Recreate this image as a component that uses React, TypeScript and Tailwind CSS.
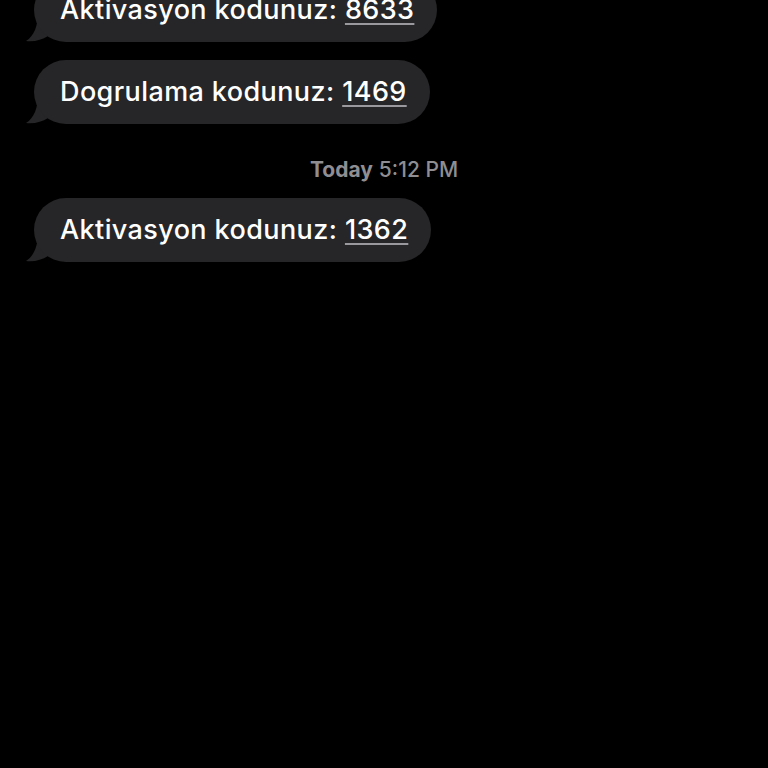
const bubbles = [
  { label: 'Aktivasyon kodunuz:', code: '8633' },
  { label: 'Dogrulama kodunuz:', code: '1469' },
]

function Tail() {
  return (
    <svg
      className="absolute left-[-8px] bottom-0"
      width="30"
      height="30"
      viewBox="0 0 30 30"
      fill="#262628"
    >
      <path d="M12 0 C12 14 8 24 0 29 C8 30 16 28 22 24 L30 26 L30 0 Z" />
    </svg>
  )
}

function Bubble({ label, code }: { label: string; code: string }) {
  return (
    <div className="relative self-start">
      <Tail />
      <div className="relative h-[64px] rounded-[32px] bg-[#262628] pl-[26px] pr-[23px] flex items-center text-white text-[27px] font-medium tracking-[0.4px]">
        <span>
          {label}{' '}
          <span className="underline decoration-[#9a9a9e] decoration-[1.5px] underline-offset-[4px]">
            {code}
          </span>
        </span>
      </div>
    </div>
  )
}

export default function App() {
  return (
    <div
      className="w-[768px] h-[768px] bg-black overflow-hidden"
      style={{ fontFamily: 'Inter, "Liberation Sans", sans-serif' }}
    >
      <div className="flex flex-col pl-[34px] mt-[-22px]">
        {bubbles.map((b) => (
          <div key={b.code} className="mb-[18px] flex">
            <Bubble label={b.label} code={b.code} />
          </div>
        ))}
        <div className="mt-[15px] mb-[15px] text-center pr-[34px] text-[21px] text-[#8e8e93] leading-[26px]">
          <span className="font-bold">Today</span> <span className="font-medium">5:12 PM</span>
        </div>
        <div className="flex">
          <Bubble label="Aktivasyon kodunuz:" code="1362" />
        </div>
      </div>
    </div>
  )
}
